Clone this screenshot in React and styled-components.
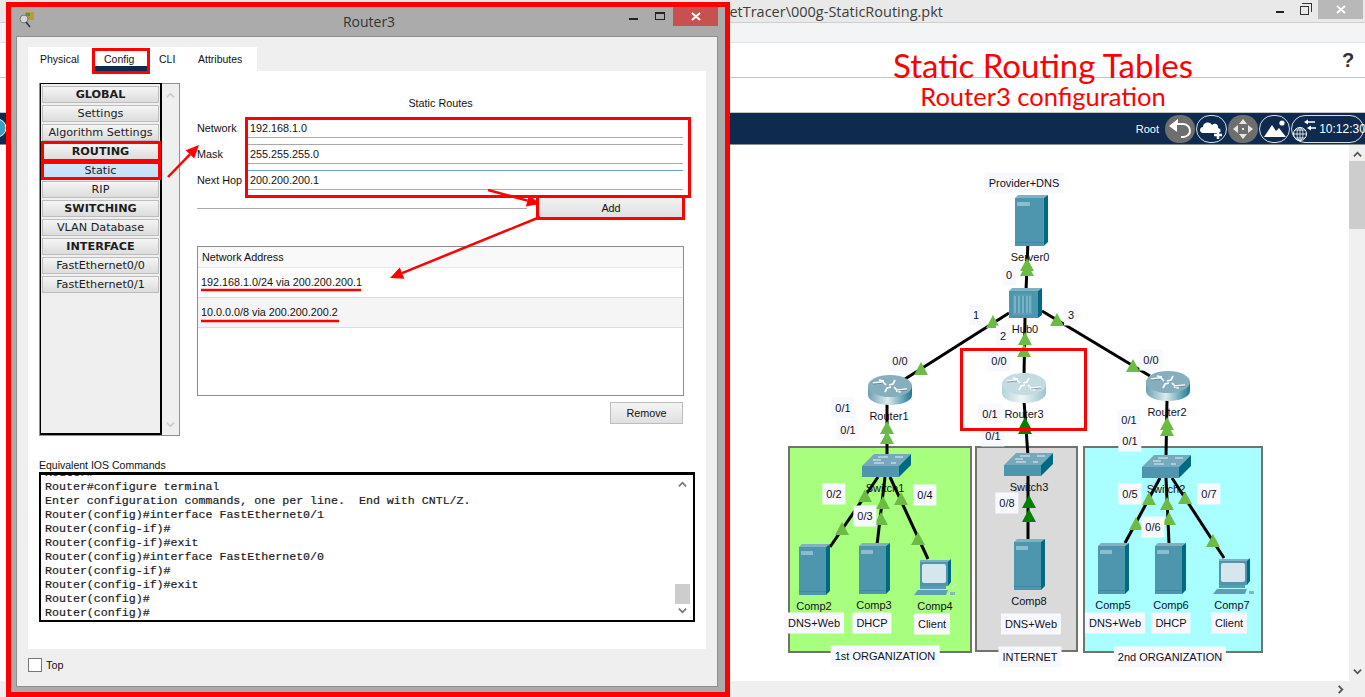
import React from "react";
import styled, { createGlobalStyle } from "styled-components";

const Global = createGlobalStyle`
  html, body { margin: 0; padding: 0; background: #fff; overflow: hidden; }
  * { box-sizing: border-box; }
`;

const UI = `"Liberation Sans", Arial, sans-serif`;
const RED = "#ff0000";

/* ---------- background application window ---------- */
const Page = styled.div`
  position: relative; width: 1365px; height: 697px; overflow: hidden;
  display: flex; flex-direction: column; background: #fff; font-family: ${UI};
`;
const WinBar = styled.div`
  height: 23px; flex: none; display: flex; background: #e9e9e9; border-bottom: 1px solid #cfcfcf;
`;
const WinPath = styled.div`
  width: 943px; text-align: right; white-space: nowrap; overflow: hidden; flex: none;
  font: 14.5px/23px "Open Sans", sans-serif; color: #3c3c3c;
`;
const WinControls = styled.div`
  margin-left: auto; display: flex; align-items: flex-start; height: 19px; margin-right: 2px;
`;
const WinMin = styled.span`
  width: 8px; height: 2px; background: #222; margin: 11px 16px 0 0;
`;
const WinMax = styled.span`
  position: relative; width: 9px; height: 9px; border: 1.5px solid #333; margin: 6px 9px 0 0;
  &::after { content: ""; position: absolute; left: 1px; top: -4px; width: 9px; height: 8px;
    border: 1px solid #333; border-left: 0; border-bottom: 0; }
`;
const WinClose = styled.span`
  width: 45px; height: 19px; background: #b8b8b8; display: flex; align-items: center; justify-content: center;
`;
const ToolRow = styled.div`
  height: 20px; flex: none; background: #f3f4f6; border-bottom: 1px solid #e3e3e3;
`;
const SlideTop = styled.div`
  position: relative; height: 35px; flex: none; border-bottom: 1px solid #c4c4c4;
`;
const SlideTitle = styled.div`
  margin-left: 721px; width: 644px; text-align: center; color: ${RED}; white-space: nowrap;
  font: 33px/44px Lato, sans-serif;
`;
const SlideBottom = styled.div`
  height: 35px; flex: none; border-bottom: 1px solid #c4c4c4;
`;
const SlideSub = styled.div`
  margin-left: 721px; width: 644px; text-align: center; color: ${RED}; white-space: nowrap;
  font: 25.5px/37px Lato, sans-serif;
`;
const Help = styled.span`
  position: absolute; left: 1342px; top: 5px; font: bold 20px/24px "Liberation Sans", sans-serif; color: #333;
`;
const NavBar = styled.div`
  height: 32px; flex: none; background: #0f2a4f; border-bottom: 1px solid #8a8f96;
  display: flex; align-items: center; justify-content: flex-end; padding-right: 1px;
`;
const NavLabel = styled.span`
  color: #fff; font-size: 11px; margin-right: 5px;
`;
const NavBtn = styled.span`
  width: ${p => p.$w || 31}px; height: 28px; flex: none; border-radius: 15px; margin-left: 1px;
  display: flex; align-items: center; justify-content: center;
  background: ${p => (p.$solid ? "#6e6e6e" : "transparent")};
  border: ${p => (p.$solid ? "none" : "1.5px solid #d8dde5")};
  color: #fff; font-size: 12px;
`;
const CanvasRow = styled.div`
  flex: 1; display: flex; min-height: 0;
`;
const Canvas = styled.div`
  position: relative; flex: 1; background: #fff;
`;
const VScroll = styled.div`
  width: 16px; flex: none; background: #f0f0f0; display: flex; flex-direction: column;
  align-items: center; justify-content: space-between; padding: 5px 0;
`;
const VThumb = styled.span`
  position: absolute; right: 0; top: 161px; width: 16px; height: 68px; background: #cdcdcd;
`;
const BottomBar = styled.div`
  height: 16px; flex: none; background: #efefef; display: flex; align-items: center; justify-content: flex-end;
  padding-right: 20px;
`;
const Zone = styled.div`
  position: absolute; background: ${p => p.$bg}; border: 2px solid #6f746f;
`;
const Layer = styled.svg`
  position: absolute; left: 0; top: 0; display: block; overflow: visible;
`;
const Label = styled.span`
  position: absolute; transform: translate(-50%, -50%); white-space: nowrap; font-size: 11px; line-height: 13px;
  color: #101020; padding: ${p => (p.$box ? "4px" : "0")};
  background: ${p => (p.$box ? "#f8f9ff" : "transparent")};
`;
const NodeMark = styled.div`
  position: absolute; left: 960px; top: 203px; width: 127px; height: 83px; border: 3px solid ${RED};
`;

/* ---------- dialog ---------- */
const Dialog = styled.div`
  position: absolute; left: 6px; top: 2px; width: 724px; height: 695px; border: 5px solid ${RED};
  background: #ababab; display: flex; flex-direction: column; z-index: 2;
`;
const DlgTitle = styled.div`
  position: relative; height: 29px; flex: none; display: flex; align-items: center; justify-content: center;
  font: 14px/29px "Open Sans", sans-serif; color: #333; padding-left: 2px;
`;
const DlgIcon = styled.svg`
  position: absolute; left: 8px; top: 5px; display: block;
`;
const DlgControls = styled.div`
  position: absolute; right: 7px; top: 0; display: flex; align-items: flex-start;
`;
const DlgMin = styled.span`
  width: 9px; height: 2px; background: #222; margin: 11px 17px 0 0;
`;
const DlgMax = styled.span`
  width: 10px; height: 8px; border: 1px solid #222; border-top-width: 2px; margin: 5px 8px 0 0;
`;
const DlgClose = styled.span`
  width: 45px; height: 19px; background: #c75050; display: flex; align-items: center; justify-content: center;
`;
const DlgBody = styled.div`
  flex: 1; margin: 0 7px 5px 5px; background: #efefef; border: 1px solid #8e8e8e; border-bottom-width: 1px;
  padding: 10px 10px 0 11px; display: flex; flex-direction: column; min-height: 0;
`;
const Tabs = styled.div`
  display: flex; align-self: flex-start; height: 24px; background: #fff; width: 229px;
`;
const Tab = styled.div`
  position: relative; font-size: 10.5px; line-height: 24px; color: #111; padding-left: ${p => p.$pl}px; width: ${p => p.$w}px;
  ${p => p.$active && `
    &::after { content: ""; position: absolute; left: 3px; right: 3px; bottom: 0; height: 5px; background: #0f2a4f; }
    &::before { content: ""; position: absolute; left: 0; right: 0; top: 1px; bottom: -3px; border: 3px solid ${RED}; z-index: 2; }
  `}
`;
const Panel = styled.div`
  width: 678px; height: 578px; flex: none; background: #fff; padding: 12px 11px 0; display: flex; flex-direction: column;
`;
const Upper = styled.div`
  display: flex; height: 353px; flex: none;
`;
const SideFrame = styled.div`
  width: 141px; flex: none; display: flex; border: 1px solid #8f9096; border-left-width: 1px; border-top-width: 1px;
  background: #efefef;
`;
const SideList = styled.div`
  width: 122px; height: 352px; flex: none; border: 1px solid #000; border-width: 1px 2px 2px 1px; margin-top: -1px;
  padding: 2px 1px; display: flex; flex-direction: column; gap: 2px;
`;
const SideItem = styled.div`
  position: relative; height: 17px; flex: none; border: 1px solid #bdbdbd;
  background: ${p => (p.$sel ? "linear-gradient(#cfe6fa,#c6e0f7)" : "linear-gradient(#f5f5f5,#dcdcdc)")};
  text-align: center; font: ${p => (p.$head ? "bold" : "normal")} 11.2px/15px "DejaVu Sans", sans-serif; color: #1c1c1c;
  ${p => p.$mark && `
    &::after { content: ""; position: absolute; left: -2px; right: -3px; top: ${p.$mark === "a" ? "-3px" : "-2px"};
      bottom: ${p.$mark === "a" ? "-3px" : "-2px"}; border: 3px solid ${RED}; }
  `}
`;
const SideScroll = styled.div`
  flex: 1; display: flex; flex-direction: column; align-items: center; justify-content: space-between; padding: 7px 0 6px;
`;
const Form = styled.div`
  margin-left: 17px; width: 487px; display: flex; flex-direction: column; flex: none;
`;
const FormHead = styled.div`
  height: 35px; flex: none; padding-top: 13px; text-align: center; font-size: 10.8px; line-height: 14px; color: #111;
`;
const Fields = styled.div`
  position: relative; display: flex; flex-direction: column; gap: 6px; padding-top: 0; height: 74px; flex: none;
  &::after { content: ""; position: absolute; left: 48px; top: -1px; width: 440px; height: 75px; border: 3px solid ${RED}; }
`;
const Field = styled.div`
  display: flex; height: 20px; flex: none;
`;
const FieldLabel = styled.div`
  width: 50px; flex: none; font-size: 10.8px; line-height: 20px; color: #111; white-space: nowrap;
`;
const FieldValue = styled.div`
  flex: 1; margin-right: 1px; border-top: 1px solid ${p => p.$top || "transparent"}; border-bottom: 1px solid #a9a9a9;
  padding-left: 3px; font-size: 10.8px; line-height: 19px; color: #111;
`;
const AddRow = styled.div`
  display: flex; align-items: center; gap: 11px; margin-top: 5px; height: 22px; flex: none;
`;
const Rule = styled.div`
  flex: 1; height: 1px; background: #a9a9a9;
`;
const AddBtn = styled.div`
  position: relative; width: 146px; height: 22px; flex: none; background: linear-gradient(#f2f2f2,#dedede);
  text-align: center; font-size: 10.8px; line-height: 23px; color: #111;
  &::after { content: ""; position: absolute; left: -2px; right: -1px; top: -2px; bottom: -1px; border: 3px solid ${RED}; }
`;
const Table = styled.div`
  margin-top: 27px; height: 150px; flex: none; border: 1px solid #8b8d94; background: #fff;
`;
const TH = styled.div`
  height: 21px; background: #f9f9f9; padding-left: 4px; font-size: 10.8px; line-height: 21px; color: #111;
  border-bottom: 1px solid #e6e6e6;
`;
const TR = styled.div`
  height: 30px; padding-left: 3px; font-size: 10.8px; line-height: 29px; color: #111;
  background: ${p => (p.$alt ? "#f5f5f5" : "#fff")}; border-bottom: 1px solid #dcdcdc;
`;
const RemoveBtn = styled.div`
  align-self: flex-end; margin: 6px 1px 0 0; width: 73px; height: 22px; flex: none; border: 1px solid #bdbdbd;
  background: linear-gradient(#f4f4f4,#e0e0e0); text-align: center; font-size: 10.8px; line-height: 20px; color: #111;
`;
const ConsoleLabel = styled.div`
  margin-top: 23px; height: 13px; flex: none; font-size: 10.5px; line-height: 13px; color: #111;
`;
const Console = styled.div`
  position: relative; width: 656px; height: 150px; flex: none; border: 2px solid #000; border-top-width: 3px; border-bottom-width: 2px;
  overflow: hidden; background: #fff;
`;
const ConsoleText = styled.pre`
  margin: -9px 0 0 4px; font: 11.63px/14px "Liberation Mono", monospace; color: #1a1a1a; -webkit-text-stroke: 0.2px #1a1a1a;
`;
const ConsoleScroll = styled.div`
  position: absolute; right: 3px; top: 0; bottom: 0; width: 15px; display: flex; flex-direction: column;
  align-items: center; justify-content: space-between; padding: 5px 0; background: #fff;
`;
const ConsoleThumb = styled.span`
  position: absolute; right: 0; top: 109px; width: 15px; height: 20px; background: #cdcdcd;
`;
const TopRow = styled.div`
  display: flex; align-items: center; gap: 4px; margin-top: 9px; font-size: 10.8px; color: #111;
`;
const Check = styled.span`
  width: 14px; height: 14px; background: #fff; border: 1px solid #777;
`;

const Chevron = ({ dir = "up", color = "#ccc", w = 2, size = 9 }) => {
  const pts = { up: "1,7 5,3 9,7", down: "1,3 5,7 9,3", right: "3,1 7,5 3,9" }[dir];
  return (
    <svg width={size} height={size} viewBox="0 0 10 10" style={{ display: "block" }}>
      <polyline points={pts} fill="none" stroke={color} strokeWidth={w} />
    </svg>
  );
};

const Cross = () => (
  <svg width="10" height="9" viewBox="0 0 10 9">
    <path d="M1 1 L9 8 M9 1 L1 8" stroke="#fff" strokeWidth="2" />
  </svg>
);

/* ---------- device drawings ---------- */
const Tower = ({ x, y, w = 31, h = 51 }) => (
  <g transform={`translate(${x} ${y}) scale(${w / 31} ${h / 51})`}>
    <polygon points="0,3 3,0 31,0 27,3" fill="#82b1c2" />
    <polygon points="0,3 27,3 27,51 0,51" fill="#4e96ad" />
    <polygon points="27,3 31,0 31,47 27,51" fill="#006a82" />
    <rect x="2" y="7" width="12" height="4" fill="#8dbdcd" />
    <rect x="0" y="47" width="27" height="1" fill="#3f8aa1" />
  </g>
);
const Hub = ({ x, y }) => (
  <g transform={`translate(${x} ${y})`}>
    <polygon points="0,3 3,0 33,0 29,3" fill="#82b1c2" />
    <polygon points="0,3 29,3 29,30 0,30" fill="#4e96ad" />
    <polygon points="29,3 33,0 33,27 29,30" fill="#006a82" />
    <path d="M6 8V25M10 8V25M14 8V25M18 8V25M21 8V25" stroke="#a9cfdb" strokeWidth="1" />
    <rect x="5" y="7" width="17" height="19" fill="none" stroke="#7eb2c3" strokeWidth="0.6" />
  </g>
);
const Router = ({ x, y, pale, id }) => (
  <g transform={`translate(${x} ${y})`}>
    <defs>
      <linearGradient id={id}>
        <stop offset="0" stopColor={pale ? "#b3d2da" : "#6f9fb0"} />
        <stop offset="0.45" stopColor={pale ? "#eef6f7" : "#dcebef"} />
        <stop offset="1" stopColor={pale ? "#9cc5ce" : "#1f7a92"} />
      </linearGradient>
    </defs>
    <path d="M0 11 V20 C0 26 10 30 22 30 C34 30 44 26 44 20 V11 Z" fill={`url(#${id})`} />
    <ellipse cx="22" cy="11" rx="22" ry="11" fill={pale ? "#c4dbe1" : "#86aebd"} />
    <path d="M5 8 L15 7 L18 10 M11 5 L16 6 M39 14 L29 15 L26 12 M33 17 L28 16 M27 5 L25 9 L21 10 M17 17 L19 13 L23 12"
      fill="none" stroke="#fff" strokeWidth="1.7" />
    <path d="M5 9 L15 8 M39 15 L29 16" stroke="#2b5f72" strokeWidth="0.5" />
  </g>
);
const Switch = ({ x, y }) => (
  <g transform={`translate(${x} ${y})`}>
    <polygon points="0,12 12,0 49,0 37,12" fill="#75a9bb" />
    <polygon points="0,12 37,12 37,23 0,23" fill="#4e96ad" />
    <polygon points="37,12 49,0 49,11 37,23" fill="#006a82" />
    <path d="M26 3H16M33 3H41M12 9H22M29 9H34M11 6H19" stroke="#e8f2f5" strokeWidth="1.2" />
  </g>
);
const PC = ({ x, y }) => (
  <g transform={`translate(${x} ${y})`}>
    <polygon points="6,1 36,1 36,3 6,3" fill="#7fb0c2" />
    <rect x="6" y="3" width="28" height="24" fill="#4e96ad" />
    <polygon points="34,3 37,0 37,23 34,27" fill="#006a82" />
    <rect x="8" y="5" width="24" height="19" rx="2" fill="#d6e6ed" />
    <rect x="6" y="27" width="26" height="3" fill="#5a9db3" />
    <polygon points="0,36 4,31 34,31 32,36" fill="#5e9fb5" />
    <rect x="36" y="33" width="5" height="3" fill="#8ab5c4" />
    <path d="M38 30 C39 26 42 25 44 25" fill="none" stroke="#d9e6ea" strokeWidth="1" />
  </g>
);

/* ---------- diagram data, in page coordinates ---------- */
const Y0 = 144;
const links = [
  [1028,240,1026,290],[1009,312,905,378],[1042,310,1150,375],[1025,317,1024,375],
  [887,400,887,455],[1024,400,1028,455],[1167,398,1166,455],
  [878,476,830,546],[885,476,877,544],[890,476,928,558],[1028,475,1028,538],
  [1160,477,1125,542],[1166,477,1169,542],[1172,477,1224,557],
];
const tris = [
  [1027,264],[1027,269],[993,321],[921,368],[1057,319],[1025,338],[1024,350],
  [887,427],[887,437],[1133,365],[1167,423],[1167,429],
  [865,495],[842,528],[883,502],[881,518],[901,498],[918,538],
  [1149,498],[1136,523],[1167,503],[1169,518],[1185,497],[1213,540],
];
const darkTris = [[1025,423],[1025,427],[1029,501],[1029,515]];
const boxed = [
  ["Provider+DNS",1024,182],["0",1009,274],["1",976,314],["3",1071,314],["2",1003,335],
  ["0/0",900,360],["0/0",999,360],["0/0",1151,359],
  ["0/1",843,407],["0/1",848,429],["0/1",990,413],["0/1",993,435],["0/1",1129,419],["0/1",1130,440],
  ["0/2",834,493],["0/3",865,515],["0/4",925,494],["0/8",1007,502],["0/5",1130,493],["0/6",1153,526],["0/7",1209,493],
  ["DNS+Web",814,622],["DHCP",872,622],["Client",932,623],["DNS+Web",1031,623],["DNS+Web",1115,622],["DHCP",1171,622],["Client",1229,622],
  ["1st ORGANIZATION",885,655],["INTERNET",1030,656],["2nd ORGANIZATION",1170,656],
];
const plain = [
  ["Server0",1030,256],["Hub0",1025,328],["Router1",889,415],["Router3",1024,413],["Router2",1167,411],
  ["Switch1",885,487],["Switch3",1029,486],["Switch2",1166,488],
  ["Comp2",814,605],["Comp3",874,604],["Comp4",935,605],["Comp8",1029,600],["Comp5",1113,604],["Comp6",1171,604],["Comp7",1232,604],
];
const zones = [
  { x: 788, y: 445, w: 184, h: 207, bg: "#a8ff7e" },
  { x: 975, y: 445, w: 103, h: 206, bg: "#dadada" },
  { x: 1083, y: 445, w: 180, h: 207, bg: "#a9ffff" },
];
const menu = [
  ["GLOBAL", true], ["Settings"], ["Algorithm Settings"], ["ROUTING", true, false, "a"], ["Static", false, true, "b"],
  ["RIP"], ["SWITCHING", true], ["VLAN Database"], ["INTERFACE", true], ["FastEthernet0/0"], ["FastEthernet0/1"],
];
const consoleText = `Router#
Router#configure terminal
Enter configuration commands, one per line.  End with CNTL/Z.
Router(config)#interface FastEthernet0/1
Router(config-if)#
Router(config-if)#exit
Router(config)#interface FastEthernet0/0
Router(config-if)#
Router(config-if)#exit
Router(config)#
Router(config)#`;

const Arrow = ({ a, b, c, d }) => {
  const len = Math.hypot(c - a, d - b);
  const ux = (c - a) / len, uy = (d - b) / len;
  const bx = c - ux * 13, by = d - uy * 13;
  const px = -uy * 6, py = ux * 6;
  return (
    <g>
      <line x1={a} y1={b} x2={bx} y2={by} stroke={RED} strokeWidth="2.5" />
      <polygon points={`${c},${d} ${bx + px},${by + py} ${bx - px},${by - py}`} fill={RED} />
    </g>
  );
};

const Annotations = styled.svg`
  position: absolute; left: 0; top: 0; z-index: 3; display: block; pointer-events: none;
`;
const LeftEdge = styled.div`
  position: absolute; left: 0; top: 113px; width: 6px; height: 30px; overflow: hidden;
`;

export default function App() {
  return (
    <Page>
      <Global />
      <WinBar>
        <WinPath>PacketTracer\000g-StaticRouting.pkt</WinPath>
        <WinControls>
          <WinMin /><WinMax /><WinClose><Cross /></WinClose>
        </WinControls>
      </WinBar>
      <ToolRow />
      <SlideTop>
        <SlideTitle>Static Routing Tables</SlideTitle>
        <Help>?</Help>
      </SlideTop>
      <SlideBottom>
        <SlideSub>Router3 configuration</SlideSub>
      </SlideBottom>
      <NavBar>
        <NavLabel>Root</NavLabel>
        <NavBtn $solid $w={30}>
          <svg width="24" height="20" viewBox="0 0 24 20">
            <path d="M3 7 L9 2 V5 H15 C20 5 22 9 22 12 C22 15 19 18 15 18 L13 18" fill="none" stroke="#fff" strokeWidth="2" />
            <polygon points="1,7 9,1 9,13" fill="#fff" />
          </svg>
        </NavBtn>
        <NavBtn>
          <svg width="26" height="22" viewBox="0 0 26 22">
            <path d="M4 15 C0 15 0 9 4 9 C4 4 11 3 13 7 C16 4 20 7 19 10 C23 11 22 15 19 15 Z" fill="#fff" />
            <path d="M19 12 V21 M15 17 H23" stroke="#fff" strokeWidth="2.5" />
          </svg>
        </NavBtn>
        <NavBtn $solid $w={30}>
          <svg width="22" height="22" viewBox="0 0 22 22" fill="#e6e6e6">
            <polygon points="11,1 15,6 7,6" /><polygon points="11,21 15,16 7,16" />
            <polygon points="1,11 6,7 6,15" /><polygon points="21,11 16,7 16,15" />
            <rect x="10" y="10" width="2" height="2" />
          </svg>
        </NavBtn>
        <NavBtn>
          <svg width="24" height="20" viewBox="0 0 24 20" fill="#fff">
            <polygon points="1,18 9,6 13,12 16,9 23,18" />
            <circle cx="19" cy="4" r="2.6" />
          </svg>
        </NavBtn>
        <NavBtn $w={73}>
          <svg width="26" height="24" viewBox="0 0 26 24" style={{ flex: "none", marginRight: 2, marginLeft: 2 }}>
            <circle cx="9" cy="17" r="6.5" fill="none" stroke="#fff" strokeWidth="1" />
            <path d="M2.5 17H15.5M9 10.5V23.5M4 13H14M4 21H14" stroke="#fff" strokeWidth="0.8" />
            <ellipse cx="9" cy="17" rx="3" ry="6.5" fill="none" stroke="#fff" strokeWidth="0.8" />
            <path d="M15 5H24M18 11H25" stroke="#fff" strokeWidth="1.6" />
            <polygon points="13,5 17,2.5 17,7.5" fill="#fff" />
            <polygon points="16,11 20,8.5 20,13.5" fill="#fff" />
          </svg>
          <span>10:12:30</span>
        </NavBtn>
      </NavBar>
      <CanvasRow>
        <Canvas>
          {zones.map((z, i) => (
            <Zone key={i} $bg={z.bg} style={{ left: z.x, top: z.y - Y0, width: z.w, height: z.h }} />
          ))}
          <Layer width="1349" height="537" viewBox={`0 ${Y0} 1349 537`}>
            {links.map((l, i) => (
              <line key={i} x1={l[0]} y1={l[1]} x2={l[2]} y2={l[3]} stroke="#000" strokeWidth="3" />
            ))}
            <Tower x={1015} y={194} w={33} />
            <Hub x={1009} y={287} />
            <Router x={868} y={374} id="r1" />
            <Router x={1002} y={372} pale id="r3" />
            <Router x={1146} y={370} id="r2" />
            <Switch x={862} y={453} />
            <Switch x={1004} y={452} />
            <Switch x={1142} y={454} />
            <Tower x={799} y={543} />
            <Tower x={859} y={542} />
            <Tower x={1014} y={538} />
            <Tower x={1098} y={542} />
            <Tower x={1155} y={542} />
            <PC x={914} y={558} />
            <PC x={1213} y={557} />
            {tris.map((t, i) => (
              <polygon key={i} points={`${t[0]},${t[1] - 7} ${t[0] + 7},${t[1] + 6} ${t[0] - 7},${t[1] + 6}`} fill="#6cbb45" />
            ))}
            {darkTris.map((t, i) => (
              <polygon key={i} points={`${t[0]},${t[1] - 7} ${t[0] + 7},${t[1] + 6} ${t[0] - 7},${t[1] + 6}`} fill="#008000" />
            ))}
          </Layer>
          {boxed.map((b, i) => (
            <Label key={i} $box style={{ left: b[1], top: b[2] - Y0 }}>{b[0]}</Label>
          ))}
          {plain.map((b, i) => (
            <Label key={i} style={{ left: b[1], top: b[2] - Y0 }}>{b[0]}</Label>
          ))}
          <NodeMark />
        </Canvas>
        <VScroll>
          <Chevron color="#555" w={2} />
          <VThumb />
          <Chevron dir="down" color="#555" w={2} />
        </VScroll>
      </CanvasRow>
      <BottomBar>
        <Chevron dir="right" color="#555" w={2} />
      </BottomBar>

      <LeftEdge>
        <svg width="6" height="30" viewBox="0 0 6 30">
          <circle cx="-3" cy="15" r="9" fill="#3a9fc0" stroke="#fff" strokeWidth="1" />
        </svg>
      </LeftEdge>

      <Dialog>
        <DlgTitle>
          <DlgIcon width="16" height="16" viewBox="0 0 16 16">
            <rect x="6" y="0" width="9" height="8" fill="#b99b3b" />
            <rect x="7" y="1" width="4" height="3" fill="#3f9a45" />
            <circle cx="5" cy="7" r="4" fill="#cfd8d8" stroke="#777" />
            <line x1="7" y1="10" x2="11" y2="15" stroke="#333" strokeWidth="1.5" />
          </DlgIcon>
          Router3
          <DlgControls>
            <DlgMin /><DlgMax /><DlgClose><Cross /></DlgClose>
          </DlgControls>
        </DlgTitle>
        <DlgBody>
          <Tabs>
            <Tab $pl={12} $w={64}>Physical</Tab>
            <Tab $active $pl={12} $w={58}>Config</Tab>
            <Tab $pl={9} $w={39}>CLI</Tab>
            <Tab $pl={9} $w={68}>Attributes</Tab>
          </Tabs>
          <Panel>
            <Upper>
              <SideFrame>
                <SideList>
                  {menu.map(([t, head, sel, mark]) => (
                    <SideItem key={t} $head={head} $sel={sel} $mark={mark}>{t}</SideItem>
                  ))}
                </SideList>
                <SideScroll>
                  <Chevron />
                  <Chevron dir="down" />
                </SideScroll>
              </SideFrame>
              <Form>
                <FormHead>Static Routes</FormHead>
                <Fields>
                  <Field><FieldLabel>Network</FieldLabel><FieldValue>192.168.1.0</FieldValue></Field>
                  <Field><FieldLabel>Mask</FieldLabel><FieldValue $top="#a9a9a9">255.255.255.0</FieldValue></Field>
                  <Field><FieldLabel>Next Hop</FieldLabel><FieldValue $top="#6a9fd0">200.200.200.1</FieldValue></Field>
                </Fields>
                <AddRow><Rule /><AddBtn>Add</AddBtn></AddRow>
                <Table>
                  <TH>Network Address</TH>
                  <TR>192.168.1.0/24 via 200.200.200.1</TR>
                  <TR $alt>10.0.0.0/8 via 200.200.200.2</TR>
                </Table>
                <RemoveBtn>Remove</RemoveBtn>
              </Form>
            </Upper>
            <ConsoleLabel>Equivalent IOS Commands</ConsoleLabel>
            <Console>
              <ConsoleText>{consoleText}</ConsoleText>
              <ConsoleScroll>
                <Chevron color="#777" />
                <ConsoleThumb />
                <Chevron dir="down" color="#777" />
              </ConsoleScroll>
            </Console>
          </Panel>
          <TopRow><Check />Top</TopRow>
        </DlgBody>
      </Dialog>

      <Annotations width="1365" height="697" viewBox="0 0 1365 697">
        <Arrow a={168} b={177} c={199} d={145} />
        <Arrow a={488} b={190} c={540} d={204} />
        <Arrow a={540} b={217} c={390} d={278} />
        <line x1="201" y1="290" x2="361" y2="290" stroke={RED} strokeWidth="2.5" />
        <line x1="201" y1="321" x2="339" y2="321" stroke={RED} strokeWidth="2.5" />
      </Annotations>
    </Page>
  );
}
